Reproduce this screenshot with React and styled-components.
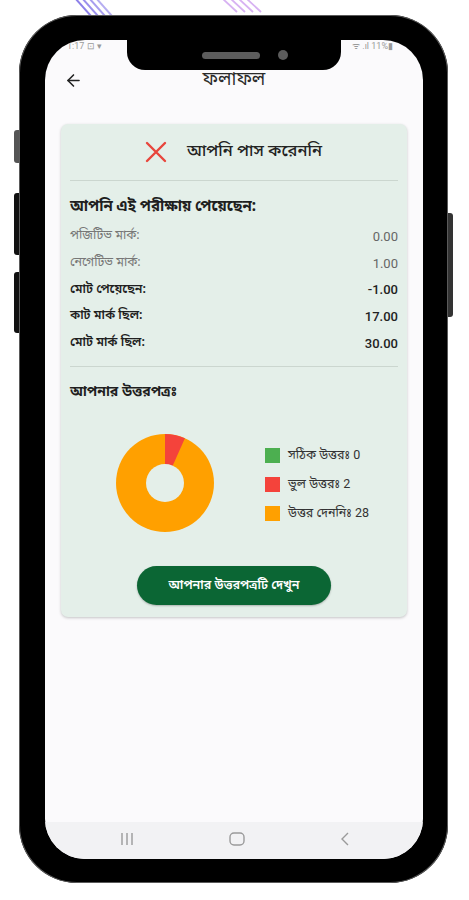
import React from "react";
import styled, { createGlobalStyle } from "styled-components";
import { ArrowLeft } from "lucide-react";

const Global = createGlobalStyle`
  html, body { margin: 0; padding: 0; background: #ffffff; }
  body { font-family: "Noto Sans Bengali", "Noto Sans", Roboto, "Liberation Sans", sans-serif; }
`;

const Page = styled.div`
  width: 469px;
  height: 900px;
  padding-left: 19px;
  box-sizing: border-box;
  overflow: hidden;
`;

const DecoStrip = styled.svg`
  display: block;
  width: 429px;
  height: 15px;
`;

const Phone = styled.div`
  position: relative;
  width: 429px;
  height: 868px;
  box-sizing: border-box;
  padding: 25px 25px 24px 26px;
  background: #000;
  border-radius: 58px;
  box-shadow: 0 0 0 1px #5a5a5a inset;
`;

const SideButton = styled.div`
  position: absolute;
  width: 5px;
  top: ${(p) => p.$top}px;
  height: ${(p) => p.$h}px;
  ${(p) => (p.$right ? "right: -5px; border-radius: 0 3px 3px 0;" : "left: -5px; border-radius: 3px 0 0 3px;")}
  background: ${(p) => p.$c || "#111"};
`;

const Screen = styled.div`
  position: relative;
  height: 100%;
  background: #fbfafc;
  border-radius: 40px;
  overflow: hidden;
  display: flex;
  flex-direction: column;
`;

const Notch = styled.div`
  position: absolute;
  top: 0;
  left: 82px;
  width: 214px;
  height: 30px;
  background: #000;
  border-radius: 0 0 18px 18px;
  display: flex;
  align-items: center;
  justify-content: center;
  gap: 18px;
  padding-left: 22px;
  box-sizing: border-box;
`;

const Speaker = styled.div`
  width: 58px;
  height: 7px;
  border-radius: 4px;
  background: #5c5c5c;
`;

const Camera = styled.div`
  width: 10px;
  height: 10px;
  border-radius: 50%;
  background: #5c5c5c;
`;

const StatusBar = styled.div`
  height: 22px;
  display: flex;
  justify-content: space-between;
  align-items: flex-start;
  padding: 0 30px 0 22px;
  font-family: Roboto, "Liberation Sans", sans-serif;
  font-size: 9px;
  color: #9a9a9a;
  line-height: 12px;
`;

const Header = styled.div`
  height: 36px;
  display: flex;
  align-items: center;
  position: relative;
  padding-left: 19px;
`;

const Title = styled.div`
  position: absolute;
  left: 0;
  right: 0;
  text-align: center;
  font-size: 18.5px;
  font-weight: 400;
  color: #2b2b2b;
  pointer-events: none;
  top: 6px;
`;

const Card = styled.div`
  margin: 26px 16px 0 16px;
  background: #e4efe9;
  border-radius: 7px;
  box-shadow: 0 1px 3px rgba(0, 0, 0, 0.22);
  padding: 0 9px 12px 9px;
  display: flex;
  flex-direction: column;
`;

const ResultRow = styled.div`
  height: 52px;
  padding-top: 3px;
  box-sizing: border-box;
  display: flex;
  align-items: center;
  justify-content: center;
  gap: 19px;
  padding-right: 2px;
  font-size: 16.5px;
  font-weight: 500;
  color: #222;
`;

const Divider = styled.div`
  height: 1px;
  background: #cbd6cf;
  margin-top: ${(p) => p.$mt}px;
`;

const SectionTitle = styled.div`
  margin-top: ${(p) => p.$mt}px;
  line-height: 24px;
  font-size: ${(p) => p.$size}px;
  font-weight: 700;
  color: #1f1f1f;
`;

const Marks = styled.div`
  margin-top: 4px;
  display: flex;
  flex-direction: column;
`;

const MarkRow = styled.div`
  height: 26.7px;
  display: flex;
  align-items: center;
  justify-content: space-between;
  font-size: 12.5px;
  color: ${(p) => (p.$strong ? "#1f1f1f" : "#777")};
  font-weight: ${(p) => (p.$strong ? 600 : 400)};
`;

const Value = styled.span`
  font-family: Roboto, "Liberation Sans", sans-serif;
  font-size: 13px;
  color: ${(p) => (p.$strong ? "#222" : "#666")};
  font-weight: ${(p) => (p.$strong ? 500 : 400)};
`;

const ChartRow = styled.div`
  margin-top: 28px;
  display: flex;
  align-items: center;
  padding-left: 45px;
  gap: 50px;
`;

const Legend = styled.div`
  display: flex;
  flex-direction: column;
  gap: 13px;
  padding-top: 2px;
`;

const LegendItem = styled.div`
  display: flex;
  align-items: center;
  gap: 8px;
  font-size: 12.5px;
  color: #333;
  height: 16px;
`;

const Swatch = styled.span`
  width: 15px;
  height: 15px;
  background: ${(p) => p.$c};
  display: inline-block;
`;

const Num = styled.span`
  font-family: Roboto, "Liberation Sans", sans-serif;
`;

const ButtonWrap = styled.div`
  display: flex;
  justify-content: center;
  margin-top: 33px;
`;

const ViewButton = styled.button`
  width: 194px;
  height: 39px;
  border: none;
  border-radius: 20px;
  background: #0b6634;
  color: #fff;
  font-family: inherit;
  font-size: 12.5px;
  font-weight: 600;
  box-shadow: 0 1px 2px rgba(0,0,0,0.25);
`;

const Spacer = styled.div`
  flex: 1;
`;

const NavBar = styled.div`
  height: 37px;
  background: #f2f2f4;
  display: flex;
  align-items: center;
  justify-content: space-between;
  padding: 0 72px 4px 74px;
  box-sizing: border-box;
`;

function Donut() {
  const cx = 50, cy = 50, r = 49;
  const a = (24 * Math.PI) / 180;
  const x = cx + r * Math.sin(a);
  const y = cy - r * Math.cos(a);
  return (
    <svg width="100" height="100" viewBox="0 0 100 100">
      <circle cx={cx} cy={cy} r={r} fill="#ffa000" />
      <path d={`M${cx} ${cy} L${cx} ${cy - r} A${r} ${r} 0 0 1 ${x} ${y} Z`} fill="#f4433b" />
      <circle cx={cx} cy={cy} r="19" fill="#e4efe9" />
    </svg>
  );
}

const marks = [
  { label: "পজিটিভ মার্ক:", value: "0.00" },
  { label: "নেগেটিভ মার্ক:", value: "1.00" },
  { label: "মোট পেয়েছেন:", value: "-1.00", strong: true },
  { label: "কাট মার্ক ছিল:", value: "17.00", strong: true },
  { label: "মোট মার্ক ছিল:", value: "30.00", strong: true },
];

const legend = [
  { c: "#4caf50", label: "সঠিক উত্তরঃ", n: "0" },
  { c: "#f4433b", label: "ভুল উত্তরঃ", n: "2" },
  { c: "#ffa000", label: "উত্তর দেননিঃ", n: "28" },
];

export default function App() {
  return (
    <Page>
      <Global />
      <DecoStrip viewBox="0 0 429 15">
        {[0, 1, 2, 3].map((i) => (
          <line key={"b" + i} x1={56 + i * 7} y1={-2} x2={72 + i * 7} y2={16} stroke="#7a6be6" strokeWidth="2" opacity={0.85 - i * 0.1} />
        ))}
        {[0, 1, 2, 3].map((i) => (
          <line key={"p" + i} x1={204 + i * 8} y1={-1} x2={218 + i * 8} y2={12} stroke="#d7b2f2" strokeWidth="1.8" />
        ))}
      </DecoStrip>
      <Phone>
        <SideButton $top={115} $h={33} $c="#555" />
        <SideButton $top={178} $h={62} />
        <SideButton $top={257} $h={61} />
        <SideButton $right $top={198} $h={104} $c="#333" />
        <Screen>
          <Notch>
            <Speaker />
            <Camera />
          </Notch>
          <StatusBar>
            <span>1:17 ⊡ ▾</span>
            <span>ᯤ .ıl 11%▮</span>
          </StatusBar>
          <Header>
            <ArrowLeft size={19} strokeWidth={2} color="#222" />
            <Title>ফলাফল</Title>
          </Header>
          <Card>
            <ResultRow>
              <svg width="24" height="24" viewBox="0 0 24 24">
                <path d="M3 3 L21 21 M21 3 L3 21" stroke="#e8453c" strokeWidth="2.4" strokeLinecap="round" />
              </svg>
              <span>আপনি পাস করেননি</span>
            </ResultRow>
            <Divider $mt={4} />
            <SectionTitle $mt={14} $size={15}>আপনি এই পরীক্ষায় পেয়েছেন:</SectionTitle>
            <Marks>
              {marks.map((m) => (
                <MarkRow key={m.label} $strong={m.strong}>
                  <span>{m.label}</span>
                  <Value $strong={m.strong}>{m.value}</Value>
                </MarkRow>
              ))}
            </Marks>
            <Divider $mt={10} />
            <SectionTitle $mt={14} $size={14}>আপনার উত্তরপত্রঃ</SectionTitle>
            <ChartRow>
              <Donut />
              <Legend>
                {legend.map((l) => (
                  <LegendItem key={l.label}>
                    <Swatch $c={l.c} />
                    <span>
                      {l.label} <Num>{l.n}</Num>
                    </span>
                  </LegendItem>
                ))}
              </Legend>
            </ChartRow>
            <ButtonWrap>
              <ViewButton>আপনার উত্তরপত্রটি দেখুন</ViewButton>
            </ButtonWrap>
          </Card>
          <Spacer />
          <NavBar>
            <svg width="16" height="14" viewBox="0 0 16 14">
              <path d="M3 1 V13 M8 1 V13 M13 1 V13" stroke="#9a9a9a" strokeWidth="1.4" />
            </svg>
            <svg width="18" height="16" viewBox="0 0 18 16">
              <rect x="2" y="2" width="14" height="12" rx="4" fill="none" stroke="#9a9a9a" strokeWidth="1.4" />
            </svg>
            <svg width="12" height="16" viewBox="0 0 12 16">
              <path d="M9 2 L3 8 L9 14" fill="none" stroke="#9a9a9a" strokeWidth="1.4" />
            </svg>
          </NavBar>
        </Screen>
      </Phone>
    </Page>
  );
}
